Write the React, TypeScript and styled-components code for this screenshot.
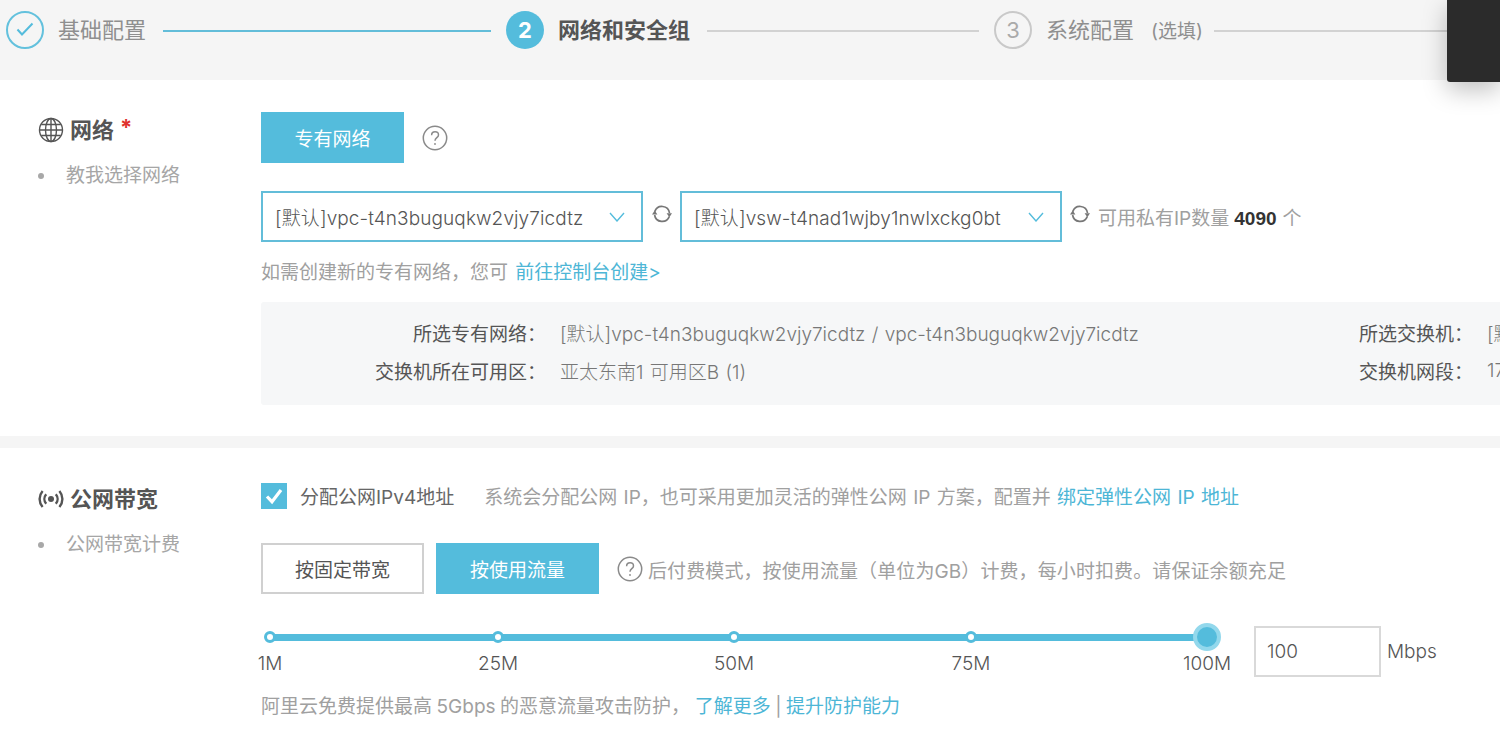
import React from 'react';
import styled, { createGlobalStyle } from 'styled-components';

const GlobalStyle = createGlobalStyle`
  html, body {
    margin: 0;
    padding: 0;
    height: 750px;
    overflow: hidden;
    background: #fff;
    font-family: Inter, "Noto Sans CJK SC", sans-serif;
    color: #666;
  }
  * { box-sizing: border-box; }
`;

const Page = styled.div`
  position: relative;
  width: 1500px;
  height: 750px;
  overflow: hidden;
  background: #fff;
`;

const Stepper = styled.div`
  height: 80px;
  background: #f5f5f5;
  display: flex;
  align-items: flex-start;
  padding: 11px 0 0 6px;
`;

const StepCircle = styled.div<{ $state: 'done' | 'active' | 'todo' }>`
  width: 38px;
  height: 38px;
  flex: none;
  border-radius: 50%;
  display: flex;
  align-items: center;
  justify-content: center;
  font-size: 22px;
  background: ${p => (p.$state === 'active' ? '#54bcdc' : 'transparent')};
  color: ${p => (p.$state === 'active' ? '#fff' : '#aaa')};
  font-weight: ${p => (p.$state === 'active' ? 700 : 400)};
  border: ${p =>
    p.$state === 'active' ? 'none' : p.$state === 'done' ? '2px solid #63c1dd' : '2px solid #c9c9c9'};
`;

const StepLabel = styled.div<{ $active?: boolean }>`
  margin-left: 14px;
  height: 38px;
  line-height: 39px;
  font-size: 22px;
  white-space: nowrap;
  color: ${p => (p.$active ? '#555' : '#8f8f8f')};
  font-weight: ${p => (p.$active ? 700 : 400)};
`;

const StepHint = styled.span`
  font-size: 19px;
  margin: 0 -6px 0 17px;
`;

const StepLine = styled.div<{ $width: number; $done?: boolean }>`
  width: ${p => p.$width}px;
  flex: none;
  height: 2px;
  margin: 19px 15px 0 17px;
  background: ${p => (p.$done ? '#63bdd9' : '#d2d2d2')};
`;

const DarkCorner = styled.div`
  position: absolute;
  top: 0;
  right: 0;
  width: 53px;
  height: 82px;
  background: #2b2b2b;
  border-bottom-left-radius: 3px;
  box-shadow: 0 8px 24px rgba(0, 0, 0, 0.25);
`;

const Section = styled.section<{ $height: number }>`
  height: ${p => p.$height}px;
  display: flex;
  background: #fff;
`;

const Divider = styled.div`
  height: 12px;
  background: #f5f5f5;
`;

const Side = styled.div<{ $top: number }>`
  width: 261px;
  flex: none;
  padding: ${p => p.$top}px 0 0 38px;
`;

const SideTitle = styled.div`
  display: flex;
  align-items: center;
  height: 28px;
  gap: 6px;
  font-size: 22px;
  font-weight: 700;
  color: #555;
  white-space: nowrap;
`;

const SideTitleText = styled.span`
  margin-top: -4px;
`;

const Required = styled.span`
  color: #e0322d;
  font-size: 22px;
  margin: -6px 0 0 0;
`;

const SideLink = styled.div`
  display: flex;
  align-items: center;
  margin-top: 18px;
  font-size: 19px;
  line-height: 28px;
  color: #a6a6a6;
  white-space: nowrap;
  &::before {
    content: '';
    width: 6px;
    height: 6px;
    margin-right: 22px;
    border-radius: 50%;
    background: #a8a8a8;
  }
`;

const Main = styled.div<{ $top: number }>`
  flex: 1;
  min-width: 0;
  padding-top: ${p => p.$top}px;
`;

const Row = styled.div<{ $top?: number; $gap?: number }>`
  display: flex;
  align-items: center;
  margin-top: ${p => p.$top ?? 0}px;
  gap: ${p => p.$gap ?? 0}px;
`;

const Button = styled.div<{ $on?: boolean }>`
  width: 163px;
  height: 51px;
  display: flex;
  align-items: center;
  justify-content: center;
  font-size: 19px;
  background: ${p => (p.$on ? '#54bcdc' : '#fff')};
  color: ${p => (p.$on ? '#fff' : '#555')};
  border: ${p => (p.$on ? 'none' : '2px solid #d0d0d0')};
`;

const NetButton = styled(Button)`
  width: 143px;
`;

const Select = styled.div`
  width: 382px;
  height: 51px;
  flex: none;
  border: 2px solid #63bdd9;
  display: flex;
  align-items: center;
  justify-content: space-between;
  padding: 0 16px 0 12px;
  font-size: 19px;
  font-weight: 300;
  letter-spacing: 0.1px;
  color: #555;
  white-space: nowrap;
`;

const RefreshSlot = styled.div<{ $width: number }>`
  width: ${p => p.$width}px;
  height: 20px;
  margin-top: -5px;
  flex: none;
  display: flex;
  justify-content: center;
`;

const Muted = styled.span`
  color: #a0a0a0;
  font-size: 19px;
  white-space: nowrap;
`;

const HintText = styled(Muted)`
  word-spacing: 2px;
  margin-top: -1px;
`;

const NoteText = styled(Muted)`
  letter-spacing: 0.1px;
  margin-top: 2px;
`;

const DescText = styled(Muted)`
  word-spacing: 1px;
`;

const Strong = styled.b`
  font-family: "Liberation Sans", sans-serif;
  color: #333;
  margin: 0 6px 0 5px;
`;

const Link = styled.span`
  color: #4db6d6;
`;

const InfoPanel = styled.div`
  margin-top: 18px;
  width: 1300px;
  height: 103px;
  background: #f6f7f8;
  border-radius: 3px;
  padding: 11px 0 0;
  display: grid;
  grid-template-columns: 285px 737px 190px 1fr;
  grid-auto-rows: 38px;
  align-items: center;
  font-size: 19px;
  white-space: nowrap;
`;

const InfoKey = styled.div`
  text-align: right;
  color: #555;
`;

const InfoValue = styled.div`
  color: #777;
  font-weight: 300;
  word-spacing: 1px;
  padding-left: 14px;
`;

const CheckBox = styled.div`
  width: 26px;
  height: 26px;
  background: #54bcdc;
  display: flex;
  align-items: center;
  justify-content: center;
  flex: none;
`;

const CheckLabel = styled.span`
  font-size: 19px;
  color: #666;
  margin: 0 30px 0 13px;
  white-space: nowrap;
`;

const Slider = styled.div`
  position: relative;
  width: 970px;
  height: 60px;
  margin-left: 9px;
`;

const Track = styled.div`
  position: absolute;
  left: 0;
  top: 8px;
  width: 937px;
  height: 7px;
  background: #54bcdc;
`;

const Dot = styled.div`
  position: absolute;
  top: 5px;
  width: 12px;
  height: 12px;
  margin-left: -6px;
  background: #fff;
  border: 3px solid #54bcdc;
  border-radius: 50%;
`;

const Handle = styled.div`
  position: absolute;
  top: -3px;
  width: 28px;
  height: 28px;
  margin-left: -14px;
  background: #54bcdc;
  border: 4px solid #93d8ec;
  border-radius: 50%;
`;

const Tick = styled.span`
  position: absolute;
  top: 26px;
  width: 80px;
  margin-left: -40px;
  text-align: center;
  font-size: 19px;
  font-weight: 300;
  line-height: 24px;
  color: #555;
`;

const BandRow = styled.div`
  display: flex;
  align-items: flex-start;
  margin-top: 32px;
`;

const NumberBox = styled.div`
  width: 127px;
  height: 51px;
  margin: 0 6px 0 14px;
  border: 2px solid #d9d9d9;
  padding-left: 11px;
  line-height: 47px;
  font-size: 19px;
  font-weight: 300;
  color: #555;
`;

const Unit = styled.span`
  font-size: 19px;
  font-weight: 300;
  line-height: 51px;
  color: #555;
`;

const Foot = styled.div`
  margin-top: 5px;
  font-size: 19px;
  word-spacing: -0.8px;
  color: #a0a0a0;
  white-space: nowrap;
`;

const HelpNote = styled(Row)`
  margin-left: 6px;
`;

const Check = () => (
  <svg width="20" height="20" viewBox="0 0 20 20" fill="none" stroke="#54bcdc" strokeWidth="2">
    <path d="M2.5 9.5L7 14.5L17.5 3.5" />
  </svg>
);

const Globe = () => (
  <svg width="26" height="26" viewBox="0 0 26 26" fill="none" stroke="#555" strokeWidth="1.4">
    <circle cx="13" cy="13" r="11.5" />
    <ellipse cx="13" cy="13" rx="5.5" ry="11.5" />
    <path d="M13 1.5v23M1.5 13h23M3.2 7.5h19.6M3.2 18.5h19.6" />
  </svg>
);

const Signal = () => (
  <svg width="26" height="20" viewBox="0 0 26 20" fill="none" stroke="#555" strokeWidth="2.4">
    <circle cx="13" cy="10" r="3" fill="#555" stroke="none" />
    <path d="M8.2 5.2c-2.4 2.8-2.4 6.8 0 9.6M17.8 5.2c2.4 2.8 2.4 6.8 0 9.6M4.6 2c-4 4.8-4 11.2 0 16M21.4 2c4 4.8 4 11.2 0 16" />
  </svg>
);

const Help = () => (
  <svg width="26" height="26" viewBox="0 0 26 26" fill="none" stroke="#8a8a8a" strokeWidth="1.5">
    <circle cx="13" cy="13" r="11.7" />
    <path d="M9.6 10.2c0-2 1.5-3.4 3.5-3.4s3.4 1.3 3.4 3.1c0 2.7-3.5 2.8-3.5 5.8" />
    <circle cx="13" cy="19" r="0.9" fill="#8a8a8a" stroke="none" />
  </svg>
);

const Refresh = () => (
  <svg width="20" height="20" viewBox="0 0 20 20" fill="none" stroke="#777" strokeWidth="1.7">
    <path d="M2.8 7.6A7.6 7.6 0 0 1 17.5 9M17.2 12.6A7.6 7.6 0 0 1 2.6 11" />
    <path d="M0 10.6L2.7 6.6L5.4 10.6zM14.6 9.2L17.4 13.2L20 9.2z" fill="#777" stroke="none" />
  </svg>
);

const Chevron = () => (
  <svg width="16" height="10" viewBox="0 0 16 10" fill="none" stroke="#54bcdc" strokeWidth="1.4">
    <path d="M1 1l7 8 7-8" />
  </svg>
);

const Tickmark = () => (
  <svg width="20" height="18" viewBox="0 0 20 18" fill="none" stroke="#fff" strokeWidth="3.2">
    <path d="M3 9.5l5 5.2L17 3" />
  </svg>
);

const marks = [
  { at: 0, label: '1M' },
  { at: 228, label: '25M' },
  { at: 464, label: '50M' },
  { at: 701, label: '75M' },
];

export default function App() {
  return (
    <Page>
      <GlobalStyle />
      <Stepper>
        <StepCircle $state="done"><Check /></StepCircle>
        <StepLabel>基础配置</StepLabel>
        <StepLine $width={328} $done />
        <StepCircle $state="active">2</StepCircle>
        <StepLabel $active>网络和安全组</StepLabel>
        <StepLine $width={272} />
        <StepCircle $state="todo">3</StepCircle>
        <StepLabel>系统配置<StepHint>(选填)</StepHint></StepLabel>
        <StepLine $width={240} />
      </Stepper>
      <DarkCorner />

      <Section $height={356}>
        <Side $top={36}>
          <SideTitle><Globe /><SideTitleText>网络</SideTitleText><Required>*</Required></SideTitle>
          <SideLink>教我选择网络</SideLink>
        </Side>
        <Main $top={32}>
          <Row $gap={18}>
            <NetButton $on>专有网络</NetButton>
            <Help />
          </Row>
          <Row $top={28}>
            <Select>[默认]vpc-t4n3buguqkw2vjy7icdtz<Chevron /></Select>
            <RefreshSlot $width={37}><Refresh /></RefreshSlot>
            <Select>[默认]vsw-t4nad1wjby1nwlxckg0bt<Chevron /></Select>
            <RefreshSlot $width={36}><Refresh /></RefreshSlot>
            <Muted>可用私有IP数量<Strong>4090</Strong>个</Muted>
          </Row>
          <Row $top={16}>
            <HintText>如需创建新的专有网络，您可 <Link>前往控制台创建&gt;</Link></HintText>
          </Row>
          <InfoPanel>
            <InfoKey>所选专有网络：</InfoKey>
            <InfoValue>[默认]vpc-t4n3buguqkw2vjy7icdtz / vpc-t4n3buguqkw2vjy7icdtz</InfoValue>
            <InfoKey>所选交换机：</InfoKey>
            <InfoValue>[默认]vsw-t4nad1wjby1nwlxckg0bt</InfoValue>
            <InfoKey>交换机所在可用区：</InfoKey>
            <InfoValue>亚太东南1 可用区B (1)</InfoValue>
            <InfoKey>交换机网段：</InfoKey>
            <InfoValue>172.31.0.0/20</InfoValue>
          </InfoPanel>
        </Main>
      </Section>

      <Divider />

      <Section $height={302}>
        <Side $top={37}>
          <SideTitle><Signal /><SideTitleText>公网带宽</SideTitleText></SideTitle>
          <SideLink>公网带宽计费</SideLink>
        </Side>
        <Main $top={34}>
          <Row>
            <CheckBox><Tickmark /></CheckBox>
            <CheckLabel>分配公网IPv4地址</CheckLabel>
            <DescText>系统会分配公网 IP，也可采用更加灵活的弹性公网 IP 方案，配置并 <Link>绑定弹性公网 IP 地址</Link></DescText>
          </Row>
          <Row $top={34} $gap={12}>
            <Button>按固定带宽</Button>
            <Button $on>按使用流量</Button>
            <HelpNote $gap={5}>
              <Help />
              <NoteText>后付费模式，按使用流量（单位为GB）计费，每小时扣费。请保证余额充足</NoteText>
            </HelpNote>
          </Row>
          <BandRow>
            <Slider>
              <Track />
              {marks.map(m => (
                <React.Fragment key={m.label}>
                  <Dot style={{ left: m.at }} />
                  <Tick style={{ left: m.at }}>{m.label}</Tick>
                </React.Fragment>
              ))}
              <Handle style={{ left: 937 }} />
              <Tick style={{ left: 937 }}>100M</Tick>
            </Slider>
            <NumberBox>100</NumberBox>
            <Unit>Mbps</Unit>
          </BandRow>
          <Foot>阿里云免费提供最高 5Gbps 的恶意流量攻击防护， <Link>了解更多</Link> | <Link>提升防护能力</Link></Foot>
        </Main>
      </Section>
    </Page>
  );
}
